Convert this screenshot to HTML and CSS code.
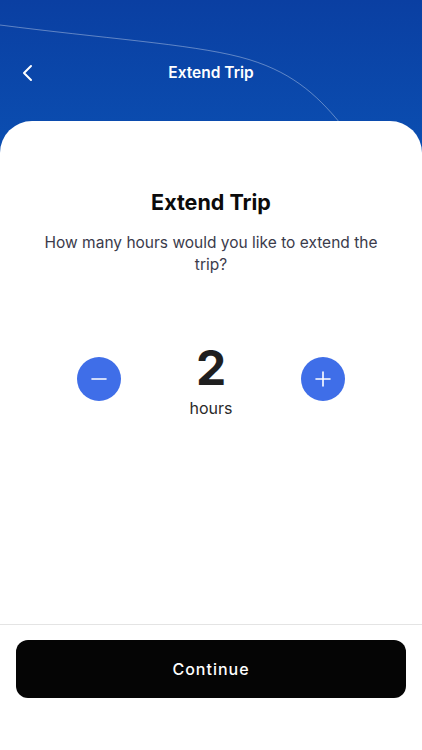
FILE: index.html
```html
<!DOCTYPE html>
<html lang="en">
<head>
  <meta charset="UTF-8">
  <meta name="viewport" content="width=device-width, initial-scale=1.0">
  <title>Extend Trip</title>
  <link rel="stylesheet" href="styles.css">
</head>
<body>

  <header class="top-bar">
    <svg class="top-curve" width="422" height="125" viewBox="0 0 422 125">
      <path d="M0 25 C 100 38, 190 44, 240 57 S 316 94, 340 123" fill="none" stroke="rgba(255,255,255,0.35)" stroke-width="1"/>
    </svg>
    <button class="back-btn" aria-label="Back">
      <svg width="14" height="18" viewBox="0 0 14 18">
        <path d="M10 2 L3 9 L10 16" fill="none" stroke="#fff" stroke-width="2" stroke-linecap="round" stroke-linejoin="round"/>
      </svg>
    </button>
    <span class="top-title">Extend Trip</span>
  </header>

  <main class="card">
    <h1>Extend Trip</h1>
    <p class="question">How many hours would you like to extend the trip?</p>

    <div class="stepper">
      <button class="step-btn" id="minusBtn" aria-label="Less">
        <svg width="16" height="16" viewBox="0 0 16 16"><path d="M1 8 H15" stroke="#fff" stroke-width="1.6" stroke-linecap="round"/></svg>
      </button>
      <div class="amount">
        <span class="amount-num" id="hours">2</span>
        <span class="amount-unit">hours</span>
      </div>
      <button class="step-btn" id="plusBtn" aria-label="More">
        <svg width="16" height="16" viewBox="0 0 16 16"><path d="M1 8 H15 M8 1 V15" stroke="#fff" stroke-width="1.6" stroke-linecap="round"/></svg>
      </button>
    </div>
  </main>

  <footer class="bottom">
    <button class="continue-btn">Continue</button>
  </footer>

  <script>
    let hours = 2;
    const hoursEl = document.getElementById('hours');

    document.getElementById('minusBtn').addEventListener('click', function() {
      if (hours > 1) hours--;
      hoursEl.textContent = hours;
    });

    document.getElementById('plusBtn').addEventListener('click', function() {
      hours++;
      hoursEl.textContent = hours;
    });
  </script>

</body>
</html>
```

FILE: styles.css
```css
* {
  box-sizing: border-box;
}

body {
  margin: 0;
  height: 750px;
  display: flex;
  flex-direction: column;
  font-family: Inter, "Liberation Sans", sans-serif;
  background: linear-gradient(to bottom, #0a3fa2, #0b4fb2 160px, #fff 160px);
}

button {
  font-family: inherit;
  border: none;
  cursor: pointer;
}

.top-bar {
  position: relative;
  height: 121px;
  flex-shrink: 0;
  display: flex;
  align-items: flex-start;
  justify-content: center;
  padding-top: 62px;
}

.top-curve {
  position: absolute;
  top: 0;
  left: 0;
}

.back-btn {
  position: absolute;
  left: 16px;
  top: 62px;
  width: 24px;
  height: 22px;
  padding: 0;
  background: none;
  display: flex;
  align-items: center;
  justify-content: center;
}

.top-title {
  color: #fff;
  font-size: 15.5px;
  font-weight: 600;
  line-height: 22px;
}

.card {
  flex: 1;
  background: #fff;
  border-radius: 32px 32px 0 0;
  padding: 66px 40px 0;
  text-align: center;
}

h1 {
  margin: 0;
  font-size: 21.5px;
  line-height: 30px;
  font-weight: 700;
  color: #0b0b0b;
}

.question {
  margin: 15px 0 0;
  font-size: 15.5px;
  line-height: 22px;
  color: #3b3b4b;
}

.stepper {
  margin-top: 64px;
  display: flex;
  align-items: center;
  justify-content: center;
  gap: 50px;
}

.step-btn {
  width: 44px;
  height: 44px;
  border-radius: 50%;
  background: #3f6ee8;
  padding: 0;
  display: flex;
  align-items: center;
  justify-content: center;
}

.amount {
  width: 80px;
  display: flex;
  flex-direction: column;
  align-items: center;
}

.amount-num {
  font-size: 48px;
  line-height: 56px;
  font-weight: 700;
  color: #1f1f1f;
}

.amount-unit {
  margin-top: 2px;
  font-size: 16px;
  line-height: 20px;
  color: #2a2a2a;
}

.bottom {
  flex-shrink: 0;
  background: #fff;
  border-top: 1px solid #e4e4e4;
  padding: 15px 16px 52px;
}

.continue-btn {
  width: 100%;
  height: 58px;
  border-radius: 12px;
  background: #050505;
  color: #fff;
  font-size: 16px;
  font-weight: 500;
  letter-spacing: 1px;
}
```
